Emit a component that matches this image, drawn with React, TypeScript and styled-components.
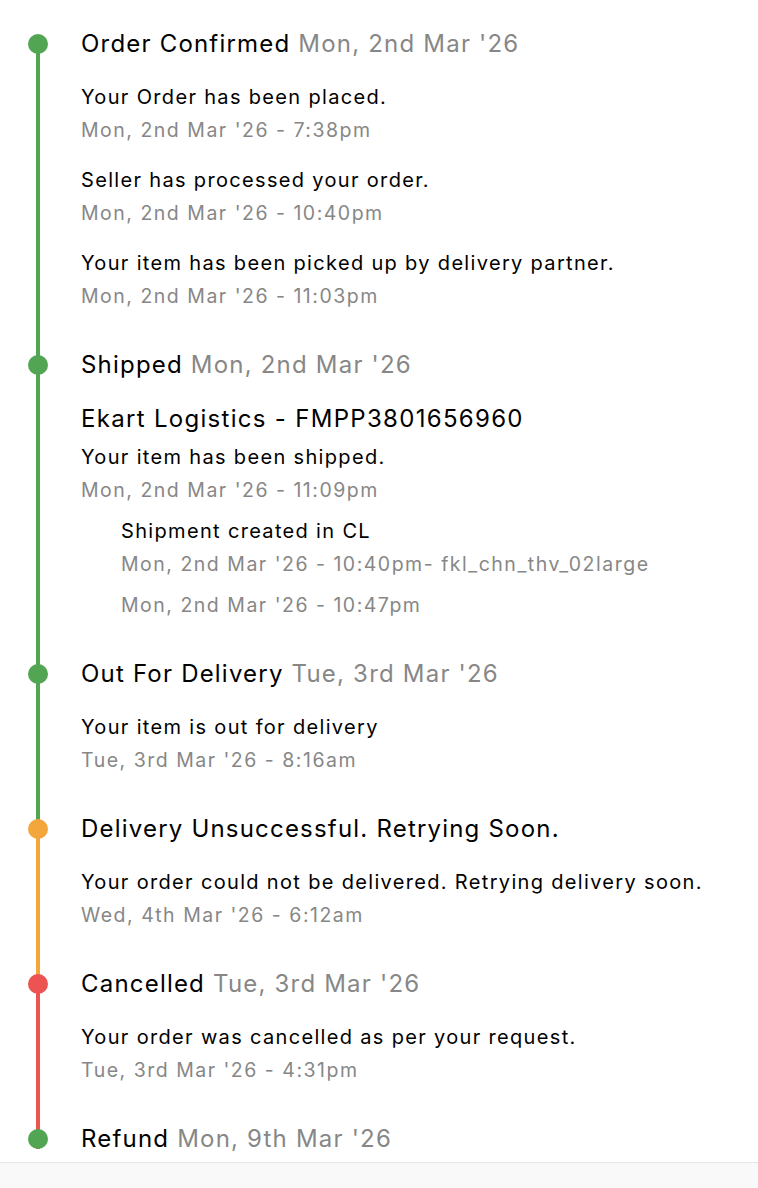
import React from "react";
import styled, { createGlobalStyle } from "styled-components";

// timeline colours
const GREEN = "#52a552";
const ORANGE = "#f2a63b";
const RED = "#ec5451";

type SubEvent = { message?: string; time: string };
type TrackEvent = { message: string; time: string; sub?: SubEvent[] };
type Step = {
  title: string;
  date?: string;
  color: string;
  carrier?: string;
  events: TrackEvent[];
};

const steps: Step[] = [
  {
    title: "Order Confirmed",
    date: "Mon, 2nd Mar '26",
    color: GREEN,
    events: [
      { message: "Your Order has been placed.", time: "Mon, 2nd Mar '26 - 7:38pm" },
      { message: "Seller has processed your order.", time: "Mon, 2nd Mar '26 - 10:40pm" },
      {
        message: "Your item has been picked up by delivery partner.",
        time: "Mon, 2nd Mar '26 - 11:03pm",
      },
    ],
  },
  {
    title: "Shipped",
    date: "Mon, 2nd Mar '26",
    color: GREEN,
    carrier: "Ekart Logistics - FMPP3801656960",
    events: [
      {
        message: "Your item has been shipped.",
        time: "Mon, 2nd Mar '26 - 11:09pm",
        sub: [
          {
            message: "Shipment created in CL",
            time: "Mon, 2nd Mar '26 - 10:40pm- fkl_chn_thv_02large",
          },
          { time: "Mon, 2nd Mar '26 - 10:47pm" },
        ],
      },
    ],
  },
  {
    title: "Out For Delivery",
    date: "Tue, 3rd Mar '26",
    color: GREEN,
    events: [{ message: "Your item is out for delivery", time: "Tue, 3rd Mar '26 - 8:16am" }],
  },
  {
    title: "Delivery Unsuccessful. Retrying Soon.",
    color: ORANGE,
    events: [
      {
        message: "Your order could not be delivered. Retrying delivery soon.",
        time: "Wed, 4th Mar '26 - 6:12am",
      },
    ],
  },
  {
    title: "Cancelled",
    date: "Tue, 3rd Mar '26",
    color: RED,
    events: [
      {
        message: "Your order was cancelled as per your request.",
        time: "Tue, 3rd Mar '26 - 4:31pm",
      },
    ],
  },
  {
    title: "Refund",
    date: "Mon, 9th Mar '26",
    color: GREEN,
    events: [],
  },
];

function Timeline() {
  return (
    <List>
      {steps.map((step, i) => {
        const last = i === steps.length - 1;
        return (
          <StepRow key={step.title} $last={last}>
            {!last && <Line $color={step.color} />}
            <Dot $color={step.color} />
            <Content>
              <Title>
                {step.title}
                {step.date && <TitleDate> {step.date}</TitleDate>}
              </Title>
              {step.carrier && <Carrier>{step.carrier}</Carrier>}
              {step.events.length > 0 && (
                <Events $tight={!!step.carrier}>
                  {step.events.map((ev) => (
                    <Event key={ev.time}>
                      <Message>{ev.message}</Message>
                      <Time>{ev.time}</Time>
                      {ev.sub && (
                        <SubList>
                          {ev.sub.map((s) => (
                            <Event key={s.time}>
                              {s.message && <Message>{s.message}</Message>}
                              <Time $flush={!s.message}>{s.time}</Time>
                            </Event>
                          ))}
                        </SubList>
                      )}
                    </Event>
                  ))}
                </Events>
              )}
            </Content>
          </StepRow>
        );
      })}
    </List>
  );
}

export default function App() {
  return (
    <>
      <GlobalStyle />
      <Page>
        <Timeline />
        <Footer />
      </Page>
    </>
  );
}

const GlobalStyle = createGlobalStyle`
  html, body {
    margin: 0;
    padding: 0;
    background: #fff;
  }
  body {
    font-family: Inter, "Noto Sans", "Liberation Sans", sans-serif;
    color: #000;
    -webkit-font-smoothing: antialiased;
  }
`;

const Page = styled.div`
  min-height: 1188px;
  display: flex;
  flex-direction: column;
  background: #f9f9f9;
`;

const List = styled.ol`
  list-style: none;
  margin: 0;
  padding: 28px 24px 7px 28px;
  background: #fff;
`;

const StepRow = styled.li<{ $last: boolean }>`
  position: relative;
  display: grid;
  grid-template-columns: 20px 1fr;
  column-gap: 33px;
  padding-bottom: ${({ $last }) => ($last ? "0" : "38px")};
`;

// connector to the next dot, drawn under it
const Line = styled.span<{ $color: string }>`
  position: absolute;
  left: 8px;
  top: 16px;
  bottom: -26px;
  width: 4px;
  background: ${({ $color }) => $color};
`;

const Dot = styled.span<{ $color: string }>`
  position: relative;
  z-index: 1;
  width: 20px;
  height: 20px;
  margin-top: 6px;
  border-radius: 50%;
  background: ${({ $color }) => $color};
`;

const Content = styled.div`
  display: flex;
  flex-direction: column;
`;

const Title = styled.div`
  font-size: 24px;
  line-height: 32px;
  letter-spacing: 1.2px;
  color: #000;
`;

const TitleDate = styled.span`
  color: #878787;
`;

const Carrier = styled.div`
  margin-top: 22px;
  font-size: 24px;
  line-height: 32px;
  letter-spacing: 1.3px;
  color: #000;
`;

const Events = styled.div<{ $tight: boolean }>`
  display: flex;
  flex-direction: column;
  gap: 20px;
  margin-top: ${({ $tight }) => ($tight ? "7px" : "22px")};
`;

const Event = styled.div`
  display: flex;
  flex-direction: column;
`;

const Message = styled.div`
  font-size: 20px;
  line-height: 30px;
  letter-spacing: 1.33px;
  color: #000;
`;

const Time = styled.div<{ $flush?: boolean }>`
  margin-top: ${({ $flush }) => ($flush ? "0" : "3px")};
  font-size: 19.5px;
  line-height: 30px;
  letter-spacing: 1.5px;
  color: #878787;
`;

const SubList = styled.div`
  display: flex;
  flex-direction: column;
  gap: 11px;
  margin-top: 11px;
  padding-left: 40px;
`;

const Footer = styled.div`
  flex: 1;
  border-top: 1px solid #e6e6e6;
  background: #f9f9f9;
`;
